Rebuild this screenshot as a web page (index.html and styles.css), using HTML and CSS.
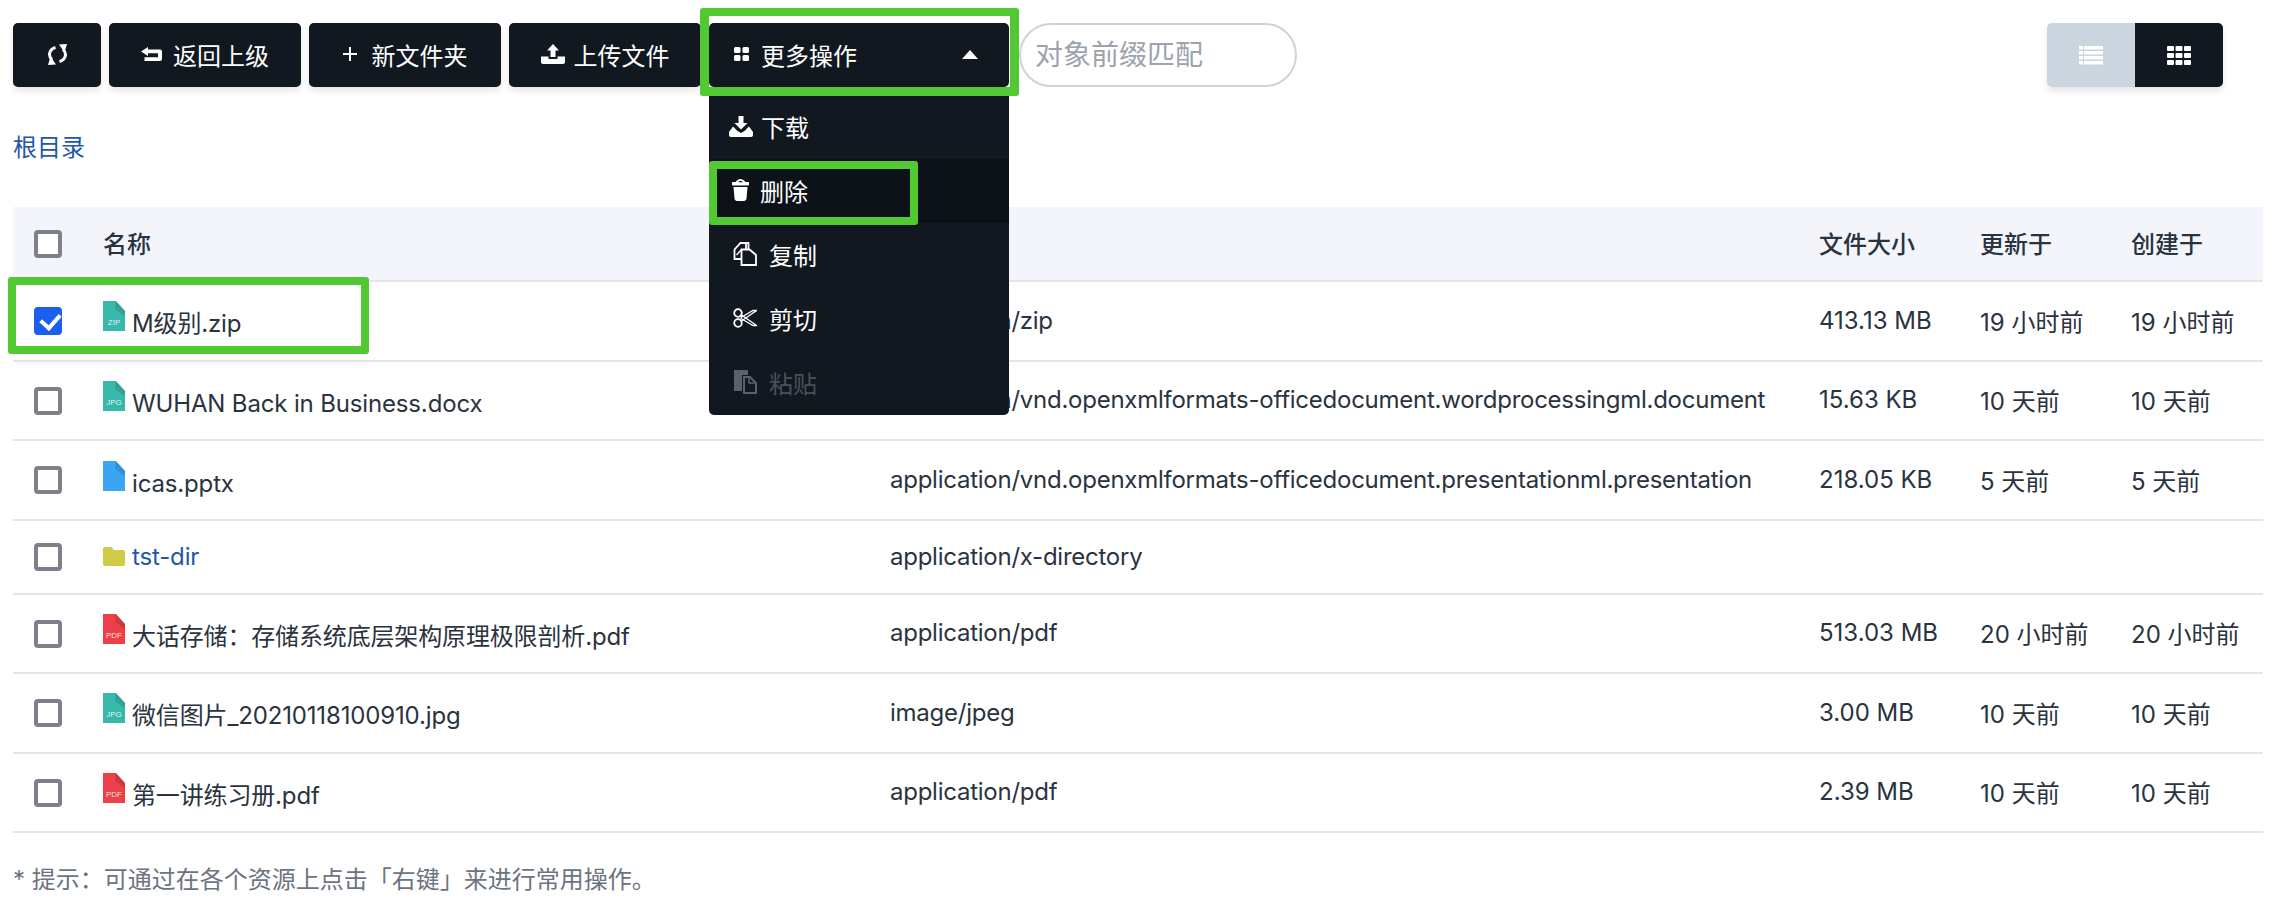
FILE: index.html
```html
<!DOCTYPE html>
<html lang="en">
<head>
    <meta charset="UTF-8">
    <title>Files</title>
    <link rel="stylesheet" href="styles.css">
</head>
<body>
    <svg class="sprite" xmlns="http://www.w3.org/2000/svg">
        <symbol id="file" viewBox="0 0 22 30">
            <path d="M0 0H13L22 10V30H0Z" fill="currentColor"/>
            <path d="M13 0L22 10L22 15L12 8Z" fill="#000" opacity=".12"/>
        </symbol>
    </svg>

    <div class="toolbar">
        <button class="btn btn-icon">
            <svg class="icon" width="21" height="21" viewBox="0 0 21 21"><g fill="none" stroke="#fff" stroke-width="3"><path d="M8.500 3.500C2.500 5 .5 11.500 5 15.500"/><path d="M12.500 17.500C18.500 16 20.500 9.500 16 5.500"/></g><path d="M1 21L9 20.500 3.500 12.500ZM20 0L12 .5 17.500 8.500Z" fill="#fff"/></svg>
        </button>
        <button class="btn">
            <svg class="icon" width="21" height="14" viewBox="0 0 21 14"><path d="M7 0L0 4.500 7 9V6.200H17V10.200H3.500V14H19C20.200 14 21 13.200 21 12V4.500C21 3.300 20.200 2.500 19 2.500H7Z" fill="#fff"/></svg>
            <span>返回上级</span>
        </button>
        <button class="btn">
            <svg class="icon" width="14" height="14" viewBox="0 0 14 14"><path d="M6 0h2v6h6v2H8v6H6V8H0V6h6Z" fill="#fff"/></svg>
            <span class="wide">新文件夹</span>
        </button>
        <button class="btn btn-upload">
            <svg class="icon" width="24" height="20" viewBox="0 0 24 20"><path d="M12 0L18 6.500H14.500V13H9.500V6.500H6ZM0 12.500H7.500V15H16.500V12.500H24V18C24 19.200 23.200 20 22 20H2C.8 20 0 19.200 0 18Z" fill="#fff"/></svg>
            <span>上传文件</span>
        </button>

        <div class="more">
            <button class="btn btn-more">
                <svg class="icon" width="15" height="14" viewBox="0 0 15 14"><rect width="6.500" height="6" rx="1.500" fill="#fff"/><rect x="8.500" width="6.500" height="6" rx="1.500" fill="#fff"/><rect y="8" width="6.500" height="6" rx="1.500" fill="#fff"/><rect x="8.500" y="8" width="6.500" height="6" rx="1.500" fill="#fff"/></svg>
                <span class="more-label">更多操作</span>
                <span class="caret"></span>
            </button>
            <ul class="menu">
                <li>
                    <svg class="icon" width="24" height="21" viewBox="0 0 24 21"><path d="M9.500 0H14.500V7H18.500L12 13.500 5.500 7H9.500ZM4 10.500L8.500 15 12 17 15.500 15 20 10.500 24 16V19C24 20.200 23.200 21 22 21H2C.8 21 0 20.200 0 19V16Z" fill="#fff"/></svg>
                    <span>下载</span>
                </li>
                <li class="active">
                    <svg class="icon icon-trash" width="17" height="22" viewBox="0 0 17 22"><path d="M8.500 0C10.500 0 12.500 1.500 13.500 3H16C16.600 3 17 3.400 17 4V5.500C17 6 16.600 6.500 16 6.500H1C.4 6.500 0 6 0 5.500V4C0 3.400 .4 3 1 3H3.500C4.500 1.500 6.500 0 8.500 0ZM8.500 2C7.500 2 6.500 2.500 6 3.200H11C10.500 2.500 9.500 2 8.500 2ZM1.500 8H15.500L14.500 19.500C14.300 21 13.300 22 12 22H5C3.700 22 2.700 21 2.500 19.500Z" fill="#fff" fill-rule="evenodd"/></svg>
                    <span>删除</span>
                </li>
                <li class="indent">
                    <svg class="icon" width="24" height="24" viewBox="0 0 24 24" fill="none" stroke="#fff" stroke-width="1.800"><path d="M8 17H1.500V7.500L7.500 1H13V7"/><path d="M14 1H15.500V7M8.500 7.500H16.500L23 13V23H8.500Z"/><path d="M8.500 7.500L3.500 13" stroke-width="1.400"/></svg>
                    <span>复制</span>
                </li>
                <li class="indent">
                    <svg class="icon" width="24" height="20" viewBox="0 0 24 20" fill="none" stroke="#fff" stroke-width="1.800"><circle cx="5" cy="5" r="3.800"/><circle cx="5" cy="15" r="3.800"/><path d="M8.500 7L23.500 17.500H20L8 10.500ZM8.500 13L23.500 2.500H20L8 9.500" stroke-width="1.300"/></svg>
                    <span>剪切</span>
                </li>
                <li class="indent disabled">
                    <svg class="icon" width="24" height="24" viewBox="0 0 24 24"><path d="M1 0H15V5H9V21H1Z" fill="#5a6168"/><path d="M11 7H17L23 13V23H11Z" fill="none" stroke="#5a6168" stroke-width="2"/><path d="M16 7V13H23" fill="none" stroke="#5a6168" stroke-width="1.500"/></svg>
                    <span>粘贴</span>
                </li>
            </ul>
        </div>

        <input class="search" type="text" placeholder="对象前缀匹配" spellcheck="false">

        <div class="view-switch">
            <button class="view-btn off">
                <svg width="24" height="19" viewBox="0 0 24 19"><path d="M0 0H4V3.500H0ZM5 0H24V3.500H5ZM0 5H4V8.500H0ZM5 5H24V8.500H5ZM0 10H4V13.500H0ZM5 10H24V13.500H5ZM0 15H4V18.500H0ZM5 15H24V18.500H5Z" fill="#fff"/></svg>
            </button>
            <button class="view-btn">
                <svg width="24" height="19" viewBox="0 0 24 19"><g fill="#fff"><rect width="7" height="5" rx="1"/><rect x="8.500" width="7" height="5" rx="1"/><rect x="17" width="7" height="5" rx="1"/><rect y="7" width="7" height="5" rx="1"/><rect x="8.500" y="7" width="7" height="5" rx="1"/><rect x="17" y="7" width="7" height="5" rx="1"/><rect y="14" width="7" height="5" rx="1"/><rect x="8.500" y="14" width="7" height="5" rx="1"/><rect x="17" y="14" width="7" height="5" rx="1"/></g></svg>
            </button>
        </div>
    </div>

    <div class="crumbs"><a>根目录</a></div>

    <table class="files">
        <colgroup>
            <col class="col-check">
            <col class="col-name">
            <col class="col-type">
            <col class="col-size">
            <col class="col-updated">
            <col class="col-created">
        </colgroup>
        <thead>
            <tr>
                <th><input type="checkbox"></th>
                <th>名称</th>
                <th></th>
                <th>文件大小</th>
                <th>更新于</th>
                <th>创建于</th>
            </tr>
        </thead>
        <tbody>
            <tr class="tall">
                <td><input type="checkbox" checked></td>
                <td class="name"><span class="ficon teal"><svg width="22" height="30"><use href="#file"/></svg><i>ZIP</i></span>M级别.zip</td>
                <td class="type">application/zip</td>
                <td>413.13 MB</td>
                <td>19 小时前</td>
                <td>19 小时前</td>
            </tr>
            <tr>
                <td><input type="checkbox"></td>
                <td class="name"><span class="ficon teal"><svg width="22" height="30"><use href="#file"/></svg><i>JPG</i></span>WUHAN Back in Business.docx</td>
                <td class="type">application/vnd.openxmlformats-officedocument.wordprocessingml.document</td>
                <td>15.63 KB</td>
                <td>10 天前</td>
                <td>10 天前</td>
            </tr>
            <tr class="tall">
                <td><input type="checkbox"></td>
                <td class="name"><span class="ficon blue"><svg width="22" height="30"><use href="#file"/></svg></span>icas.pptx</td>
                <td class="type">application/vnd.openxmlformats-officedocument.presentationml.presentation</td>
                <td>218.05 KB</td>
                <td>5 天前</td>
                <td>5 天前</td>
            </tr>
            <tr class="dir">
                <td><input type="checkbox"></td>
                <td class="name">
                    <svg class="folder" width="22" height="19" viewBox="0 0 22 19"><path d="M2 0H8.500L11 3H20C21.200 3 22 3.800 22 5V17C22 18.200 21.200 19 20 19H2C.8 19 0 18.200 0 17V2C0 .8 .8 0 2 0Z" fill="#cfcb47"/></svg><a>tst-dir</a>
                </td>
                <td class="type">application/x-directory</td>
                <td></td>
                <td></td>
                <td></td>
            </tr>
            <tr>
                <td><input type="checkbox"></td>
                <td class="name"><span class="ficon red"><svg width="22" height="30"><use href="#file"/></svg><i>PDF</i></span>大话存储：存储系统底层架构原理极限剖析.pdf</td>
                <td class="type">application/pdf</td>
                <td>513.03 MB</td>
                <td>20 小时前</td>
                <td>20 小时前</td>
            </tr>
            <tr class="tall">
                <td><input type="checkbox"></td>
                <td class="name"><span class="ficon teal"><svg width="22" height="30"><use href="#file"/></svg><i>JPG</i></span>微信图片_20210118100910.jpg</td>
                <td class="type">image/jpeg</td>
                <td>3.00 MB</td>
                <td>10 天前</td>
                <td>10 天前</td>
            </tr>
            <tr>
                <td><input type="checkbox"></td>
                <td class="name"><span class="ficon red"><svg width="22" height="30"><use href="#file"/></svg><i>PDF</i></span>第一讲练习册.pdf</td>
                <td class="type">application/pdf</td>
                <td>2.39 MB</td>
                <td>10 天前</td>
                <td>10 天前</td>
            </tr>
        </tbody>
    </table>

    <p class="tip">* 提示：可通过在各个资源上点击「右键」来进行常用操作。</p>

    <!-- green annotation boxes drawn over the screenshot -->
    <div class="mark mark-more"></div>
    <div class="mark mark-delete"></div>
    <div class="mark mark-row"></div>
</body>
</html>
```

FILE: styles.css
```css
*{
    box-sizing:border-box;
}

body{
    margin:0;
    background:white;
    color:#2a3340;
    font-family:"Inter","Noto Sans CJK SC",sans-serif;
    font-size:24px;
}

.sprite{
    display:none;
}

.toolbar{
    display:flex;
    align-items:center;
    gap:8px;
    padding:23px 53px 0 13px;
}

.btn{
    display:flex;
    align-items:center;
    justify-content:center;
    gap:11px;
    width:192px;
    height:64px;
    padding:0 0 2px;
    border:0;
    border-radius:5px;
    background:#111820;
    color:white;
    font:inherit;
    box-shadow:0 4px 6px rgba(0,0,0,.1);
}

.btn-icon{
    width:88px;
}

.wide{
    margin-left:4px;
}

.btn-upload{
    gap:9px;
}

.icon{
    flex:none;
}

.more{
    position:relative;
}

.btn-more{
    width:300px;
    justify-content:flex-start;
    padding-left:25px;
    gap:12px;
}

.more-label{
    flex:1;
    text-align:left;
}

.caret{
    width:0;
    height:0;
    margin-right:31px;
    border-left:8px solid transparent;
    border-right:8px solid transparent;
    border-bottom:9px solid white;
}

.menu{
    position:absolute;
    top:73px;
    left:0;
    width:300px;
    margin:0;
    padding:0;
    list-style:none;
    background:#111820;
    color:white;
    border-radius:0 0 5px 5px;
    z-index:2;
}

.menu li{
    display:flex;
    align-items:center;
    gap:8px;
    height:64px;
    padding:0 0 2px 20px;
}

.menu li:first-child{
    height:63px;
}

.menu .active{
    background:#0d1218;
    height:64px;
}

.menu .indent{
    padding-left:24px;
    gap:12px;
}

.icon-trash{
    margin:0 3px 0 3px;
}

.menu .disabled{
    color:#4a5158;
}

.search{
    width:278px;
    height:64px;
    margin-left:2px;
    padding:0 14px;
    border:2px solid #cdd3d9;
    border-radius:32px;
    outline:0;
    font:inherit;
    font-size:28px;
}

.search::placeholder{
    color:#9ca3ad;
}

.view-switch{
    display:flex;
    margin-left:auto;
    border-radius:5px;
    overflow:hidden;
    box-shadow:0 4px 6px rgba(0,0,0,.1);
}

.view-btn{
    display:flex;
    align-items:center;
    justify-content:center;
    width:88px;
    height:64px;
    border:0;
    background:#111820;
}

.view-btn.off{
    background:#cbd5e0;
}

.crumbs{
    margin:43px 13px 0;
    height:36px;
    line-height:36px;
}

.crumbs a, .name a{
    color:#2158a8;
}

.files{
    width:2250px;
    margin:41px 13px 0;
    border-collapse:collapse;
    table-layout:fixed;
}

.col-check{ width:90px; }
.col-name{ width:787px; }
.col-type{ width:929px; }
.col-size{ width:161px; }
.col-updated{ width:151px; }
.col-created{ width:132px; }

th{
    height:74px;
    background:#f3f5fa;
    border-bottom:2px solid #e2e5ea;
    text-align:left;
    font-weight:500;
    padding:0 0 2px;
}

td{
    height:79px;
    padding:0 0 2px;
    border-bottom:2px solid #e2e5ea;
    white-space:nowrap;
}

.tall td{
    height:80px;
}

.dir td{
    height:74px;
}

th:first-child, td:first-child{
    padding:0 0 0 21px;
}

.name{
    letter-spacing:-.15px;
}

.type{
    letter-spacing:-.25px;
}

input[type="checkbox"]{
    appearance:none;
    display:block;
    position:relative;
    width:28px;
    height:28px;
    margin:0;
    border:4px solid #7d7f8c;
    border-radius:4px;
    background:white;
}

input[type="checkbox"]:checked{
    background:#1a5fef;
    border-color:#1a5fef;
}

/* tick of the selected row */
input[type="checkbox"]:checked::after{
    content:"";
    position:absolute;
    left:6px;
    top:-1px;
    width:9px;
    height:15px;
    border:solid white;
    border-width:0 4px 4px 0;
    transform:rotate(42deg);
}

.ficon{
    display:inline-block;
    position:relative;
    width:22px;
    height:30px;
    margin-right:7px;
    vertical-align:1px;
}

.ficon svg{
    display:block;
}

.ficon i{
    position:absolute;
    left:0;
    right:0;
    bottom:4px;
    text-align:center;
    color:rgba(255,255,255,.85);
    font-family:"Liberation Sans",sans-serif;
    font-style:normal;
    font-size:8px;
    line-height:8px;
    letter-spacing:0;
}

.teal{ color:#37b8a9; }
.blue{ color:#3ba4f5; }
.red{ color:#ec3f47; }

.folder{
    margin-right:7px;
    vertical-align:-1px;
}

.tip{
    margin:30px 13px 0;
    color:#6b7480;
    line-height:34px;
}

.mark{
    position:absolute;
    border:8px solid #52c832;
    border-radius:3px;
    z-index:3;
}

.mark-more{
    left:700px;
    top:8px;
    width:319px;
    height:88px;
    border-width:8px 9px 9px;
}

.mark-delete{
    left:709px;
    top:161px;
    width:209px;
    height:64px;
}

.mark-row{
    left:8px;
    top:277px;
    width:361px;
    height:77px;
}
```
